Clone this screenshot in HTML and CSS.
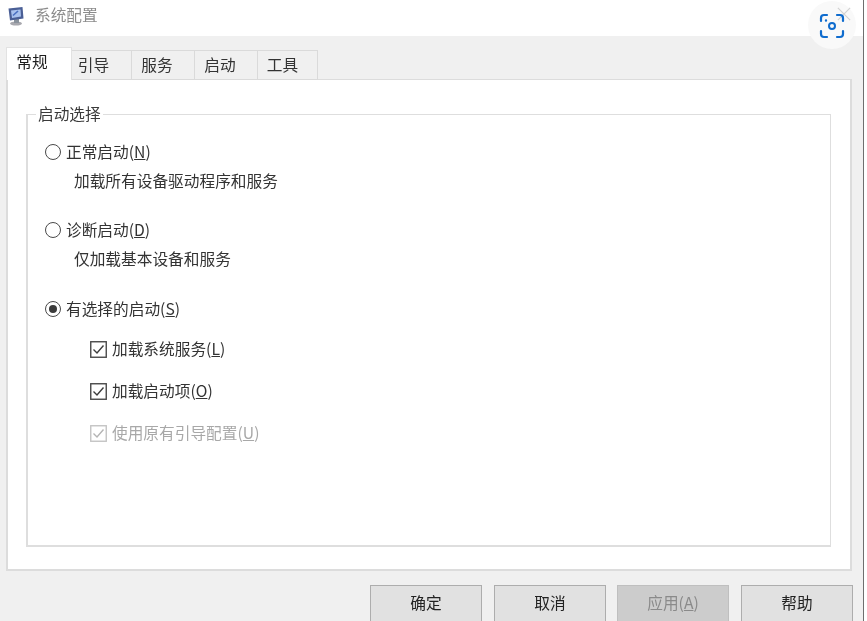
FILE: index.html
```html
<!DOCTYPE html>
<html lang="zh">
<head>
<meta charset="utf-8">
<title>系统配置</title>
<link rel="stylesheet" href="styles.css">
</head>
<body>
<div class="window">
  <header class="titlebar">
    <svg class="app-icon" width="18" height="20" viewBox="0 0 18 20">
      <ellipse cx="9" cy="17.5" rx="6" ry="2" fill="#a8a8ae"/>
      <rect x="7" y="13" width="5" height="4" fill="#8a929c"/>
      <path d="M1.5 2.5 L15.5 1 L16.5 12.5 L3 14.5 Z" fill="#4a5f96"/>
      <path d="M4 4.5 L13.5 3.5 L14 10.5 L5 12 Z" fill="#a9c2ee"/>
      <path d="M6 9.5 L11 5" stroke="#4a6fc0" stroke-width="1.6" fill="none"/>
    </svg>
    <span class="title-text">系统配置</span>
  </header>
  <main class="content">
    <nav class="tabs">
      <div class="tab active">常规</div>
      <div class="tab tab-1">引导</div>
      <div class="tab tab-2">服务</div>
      <div class="tab tab-2">启动</div>
      <div class="tab tab-3">工具</div>
    </nav>
    <section class="panel">
      <div class="group">
        <div class="legend">启动选择</div>
        <div class="option row-first">
          <span class="radio"></span><span>正常启动(<u>N</u>)</span>
        </div>
        <div class="desc">加载所有设备驱动程序和服务</div>
        <div class="option row-second">
          <span class="radio"></span><span>诊断启动(<u>D</u>)</span>
        </div>
        <div class="desc">仅加载基本设备和服务</div>
        <div class="option row-third">
          <span class="radio checked"></span><span>有选择的启动(<u>S</u>)</span>
        </div>
        <div class="check-row check-first">
          <svg class="check" width="17" height="17" viewBox="0 0 17 17"><rect x="0.75" y="0.75" width="15.5" height="15.5" fill="#fff" stroke="#4a4a4a" stroke-width="1.4"/><path d="M3.5 8.5 L7 12 L13.5 4.5" fill="none" stroke="#3c3c3c" stroke-width="1.4"/></svg>
          <span>加载系统服务(<u>L</u>)</span>
        </div>
        <div class="check-row">
          <svg class="check" width="17" height="17" viewBox="0 0 17 17"><rect x="0.75" y="0.75" width="15.5" height="15.5" fill="#fff" stroke="#4a4a4a" stroke-width="1.4"/><path d="M3.5 8.5 L7 12 L13.5 4.5" fill="none" stroke="#3c3c3c" stroke-width="1.4"/></svg>
          <span>加载启动项(<u>O</u>)</span>
        </div>
        <div class="check-row disabled">
          <svg class="check" width="17" height="17" viewBox="0 0 17 17"><rect x="0.75" y="0.75" width="15.5" height="15.5" fill="#fff" stroke="#c4c4c4" stroke-width="1.4"/><path d="M3.5 8.5 L7 12 L13.5 4.5" fill="none" stroke="#b4b4b4" stroke-width="1.4"/></svg>
          <span>使用原有引导配置(<u>U</u>)</span>
        </div>
      </div>
    </section>
    <footer class="buttons">
      <div class="btn">确定</div>
      <div class="btn">取消</div>
      <div class="btn btn-disabled">应用(<u>A</u>)</div>
      <div class="btn">帮助</div>
    </footer>
  </main>
  <div class="lens">
    <svg class="close-x" width="14" height="14" viewBox="0 0 16 16"><path d="M1 1 L15 15 M15 1 L1 15" stroke="#d2d2d2" stroke-width="1.4"/></svg>
    <svg class="lens-icon" width="26" height="26" viewBox="0 0 26 26" fill="none" stroke="#0f6cce" stroke-width="2.2" stroke-linecap="round">
      <path d="M8 2 H5 Q2 2 2 5 V8"/>
      <path d="M18 2 H21 Q24 2 24 5 V8"/>
      <path d="M2 18 V21 Q2 24 5 24 H8"/>
      <path d="M24 18 V21 Q24 24 21 24 H18"/>
      <circle cx="13" cy="13" r="3" stroke-width="2"/>
      <circle cx="7" cy="7.5" r="0.6" stroke-width="1.2"/>
    </svg>
  </div>
</div>
</body>
</html>
```
FILE: styles.css
```css
* { box-sizing: border-box; }
html, body { margin: 0; height: 100%; background: #fff; overflow: hidden; }
body {
  font-family: "Noto Sans CJK SC", "Liberation Sans", sans-serif;
  font-size: 15.7px;
  line-height: 22px;
  color: #2e2e2e;
}
.window {
  position: relative;
  width: 864px;
  height: 621px;
  border-right: 1px solid #6e6e6e;
  display: flex;
  flex-direction: column;
  overflow: hidden;
  filter: blur(0.4px);
}
.titlebar {
  height: 36px;
  flex: none;
  display: flex;
  align-items: center;
  padding-left: 7px;
  background: #fff;
}
.app-icon { flex: none; margin-top: -4px; }
.title-text { margin-left: 10px; margin-top: -7px; color: #8c8c8c; }
.content {
  flex: 1;
  background: #f0f0f0;
  padding: 11px 11px 0 6px;
  display: flex;
  flex-direction: column;
}
.tabs { display: flex; align-items: flex-end; height: 33px; flex: none; position: relative; z-index: 1; }
.tab {
  height: 30px;
  background: #f0f0f0;
  border: 1px solid #dadada;
  border-left: 0;
  text-align: center;
  line-height: 28px;
  color: #333;
}
.tab.active {
  width: 66px;
  height: 33px;
  background: #fff;
  border: 1px solid #e2e2e2;
  border-bottom: 0;
  line-height: 27px;
  padding-right: 14px;
  color: #1e1e1e;
}
.tab-1 { width: 60px; padding-right: 16px; }
.tab-2 { width: 63px; padding-right: 12px; }
.tab-3 { width: 60px; padding-right: 10px; }
.panel {
  height: 492px;
  flex: none;
  margin-top: -1px;
  background: #fff;
  border: 1px solid #dcdcdc;
  border-width: 1px 2px 2px 2px;
  padding: 34px 19px 0 18px;
}
.group {
  height: 433px;
  border: 1px solid #dedede;
  border-width: 1px 1px 2px 2px;
  padding-left: 17px;
}
.legend {
  width: max-content;
  margin: -12px 0 0 -9px;
  padding: 0 2px;
  background: #fff;
  color: #3a3a3a;
}
.option { display: flex; align-items: center; gap: 5px; height: 22px; color: #333; }
.row-first { margin-top: 16px; }
.row-second { margin-top: 27px; }
.row-third { margin-top: 28px; }
.desc { margin: 7px 0 0 29px; height: 22px; color: #333; }
.radio {
  flex: none;
  width: 16px;
  height: 16px;
  border: 1.4px solid #4a4a4a;
  border-radius: 50%;
  background: #fff;
  display: flex;
  align-items: center;
  justify-content: center;
}
.radio.checked::after {
  content: "";
  width: 8px;
  height: 8px;
  border-radius: 50%;
  background: #3a3a3a;
}
.check-row {
  display: flex;
  align-items: center;
  gap: 5px;
  height: 22px;
  margin: 20px 0 0 45px;
  color: #333;
}
.check-first { margin-top: 18px; }
.check { flex: none; }
.disabled { color: #a8a8a8; }
.buttons {
  display: flex;
  justify-content: flex-end;
  gap: 12px;
  margin-top: 14px;
  margin-right: -1px;
}
.btn {
  width: 112px;
  height: 38px;
  background: #e1e1e1;
  border: 1px solid #adadad;
  text-align: center;
  line-height: 33px;
  color: #222;
}
.btn-disabled { background: #cccccc; border-color: #bfbfbf; color: #8a8a8a; margin-left: -1px; }
.lens {
  position: absolute;
  top: 1px;
  right: 7px;
  width: 48px;
  height: 48px;
  border-radius: 50%;
  background: #f9f9f9;
}
.close-x { position: absolute; top: 6px; left: 29px; }
.lens-icon { position: absolute; top: 12px; left: 11px; }
```
